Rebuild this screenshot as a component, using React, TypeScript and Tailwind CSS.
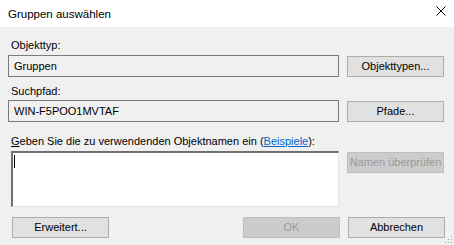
import React from "react";

const font = { fontFamily: '"Liberation Sans", Arial, sans-serif' };

const Button = ({
  children,
  disabled = false,
  className = "",
}: {
  children: React.ReactNode;
  disabled?: boolean;
  className?: string;
}) => (
  <div
    className={
      "flex h-[21px] w-[97px] shrink-0 items-center justify-center border text-[11px] leading-[13px] " +
      (disabled
        ? "border-[#bfbfbf] bg-[#cccccc] text-[#9a9a9a] "
        : "border-[#adadad] bg-[#e1e1e1] text-black ") +
      className
    }
  >
    {children}
  </div>
);

const ReadOnlyBox = ({ value }: { value: string }) => (
  <div className="flex h-[22px] w-[331px] items-center border border-[#7a7a7a] bg-[#f0f0f0] pl-[5px] text-[11px] leading-[13px] text-black">
    {value}
  </div>
);

export default function App() {
  return (
    <div className="relative h-[245px] w-[454px] overflow-hidden bg-[#f0f0f0]" style={font}>
      {/* title bar */}
      <div className="flex h-[27px] items-start justify-between bg-white">
        <span className="pl-[8px] pt-[7px] text-[11.5px] leading-[14px] text-black">
          Gruppen auswählen
        </span>
        <svg className="mr-[8px] mt-[6px]" width="10" height="10" viewBox="0 0 10 10">
          <path d="M0.5 0.5 L9.5 9.5 M9.5 0.5 L0.5 9.5" stroke="#000" strokeWidth="1" fill="none" />
        </svg>
      </div>

      <div className="flex flex-col pl-[8px] text-[11px] leading-[13px] text-black">
        <div className="mt-[12px] h-[13px] pl-[3px]">Objekttyp:</div>
        <div className="mt-[3px] flex gap-[8px]">
          <ReadOnlyBox value="Gruppen" />
          <Button className="mt-px">Objekttypen...</Button>
        </div>

        <div className="mt-[8px] h-[13px] pl-[3px]">Suchpfad:</div>
        <div className="mt-[2px] flex gap-[8px]">
          <ReadOnlyBox value="WIN-F5POO1MVTAF" />
          <Button className="mt-px">Pfade...</Button>
        </div>

        <div className="mt-[13px] h-[13px] pl-[3px]">
          <span className="underline">G</span>eben Sie die zu verwendenden Objektnamen ein (
          <span className="text-[#0066cc] underline">Beispiele</span>):
        </div>
        <div className="mt-[3px] flex gap-[8px]">
          <div className="ml-[3px] h-[56px] w-[328px] border-t-2 border-l-2 border-r border-b border-t-[#6f6f6f] border-l-[#6f6f6f] border-r-[#e3e3e3] border-b-[#e3e3e3] bg-white">
            <div className="ml-px mt-[2px] h-[13px] w-px bg-black" />
          </div>
          <Button disabled className="mt-px">
            Namen überprüfen
          </Button>
        </div>

        <div className="mt-[10px] flex">
          <Button className="ml-[4px]">Erweitert...</Button>
          <Button disabled className="ml-[134px] w-[96px]">
            OK
          </Button>
          <Button className="ml-[8px]">Abbrechen</Button>
        </div>
      </div>

      {/* size grip */}
      <svg className="absolute bottom-[1px] right-[1px]" width="9" height="9" viewBox="0 0 9 9">
        {[
          [7, 1],
          [4, 4],
          [7, 4],
          [1, 7],
          [4, 7],
          [7, 7],
        ].map(([x, y]) => (
          <rect key={`${x}-${y}`} x={x} y={y} width="1" height="1" fill="#a0a0a0" />
        ))}
      </svg>
    </div>
  );
}
